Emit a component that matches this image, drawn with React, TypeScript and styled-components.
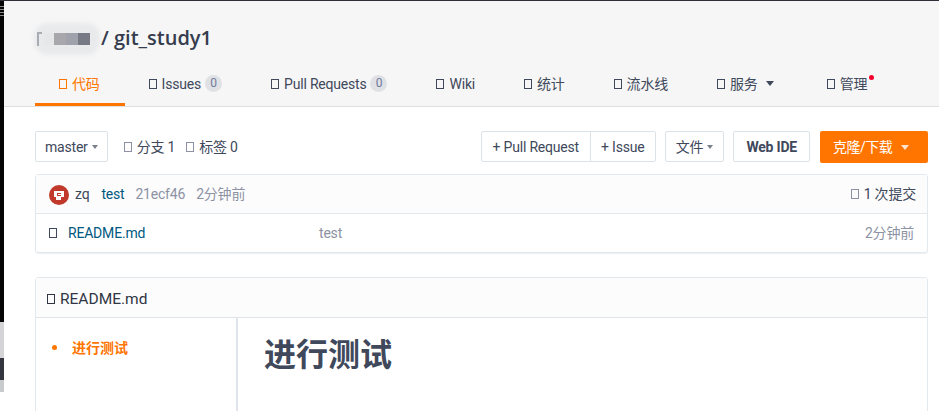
import React from "react"
import styled, { createGlobalStyle } from "styled-components"

const GlobalStyle = createGlobalStyle`
  html, body {
    margin: 0;
    padding: 0;
    background: #fff;
    overflow: hidden;
  }
  body {
    font-family: Roboto, "Noto Sans CJK SC", sans-serif;
    font-size: 14px;
    line-height: 20px;
    letter-spacing: -0.2px;
    color: #40485b;
  }
`

const tabs = [
  { label: "代码", active: true },
  { label: "Issues", count: 0 },
  { label: "Pull Requests", count: 0 },
  { label: "Wiki" },
  { label: "统计" },
  { label: "流水线" },
  { label: "服务", caret: true },
  { label: "管理", dot: true },
]

export default function App() {
  return (
    <Screen>
      <GlobalStyle />
      <SideStrip>
        <SideBlack />
        <SideShot />
      </SideStrip>
      <Page>
        <Header>
          <Title>
            <OwnerMark />
            <Blur>
              <BlurCell $shade="#e6e7e9" />
              <BlurCell $shade="#a7a7ac" />
              <BlurCell $shade="#9fa2ab" />
              <BlurCell $shade="#777a85" />
            </Blur>
            <RepoName>/ git_study1</RepoName>
          </Title>
          <Tabs>
            {tabs.map((tab) => (
              <Tab key={tab.label} $active={tab.active} $last={tab.dot}>
                <Tofu $tone={tab.active ? "#ff7500" : "#40485b"} />
                {tab.label}
                {tab.count !== undefined && <Count>{tab.count}</Count>}
                {tab.caret && <BigCaret />}
                {tab.dot && <RedDot />}
              </Tab>
            ))}
          </Tabs>
        </Header>

        <Content>
          <Toolbar>
            <Button>
              master
              <Caret />
            </Button>
            <RefInfo>
              <RefItem>
                <Tofu $tone="#8c92a4" />
                分支 1
              </RefItem>
              <RefItem>
                <Tofu $tone="#8c92a4" />
                标签 0
              </RefItem>
            </RefInfo>
            <Spacer />
            <ButtonGroup>
              <GroupButton $width={108}>+ Pull Request</GroupButton>
              <GroupButton $width={65}>+ Issue</GroupButton>
            </ButtonGroup>
            <FileButton>
              文件
              <Caret />
            </FileButton>
            <BoldButton>Web IDE</BoldButton>
            <CloneButton>
              克隆/下载
              <CloneCaret />
            </CloneButton>
          </Toolbar>

          <Card>
            <CommitRow>
              <Avatar>
                <svg width="12" height="12" viewBox="0 0 12 12">
                  <path d="M1 2h10v6H8v3H3V8H1z" fill="#fff" />
                  <path d="M4 4h4v1H5v1h3v1H4z" fill="#c0392b" />
                </svg>
              </Avatar>
              <Author>zq</Author>
              <LinkText>test</LinkText>
              <Muted>21ecf46</Muted>
              <Muted>2分钟前</Muted>
              <Spacer />
              <Tofu $tone="#8c92a4" />
              <span>1 次提交</span>
            </CommitRow>
            <FileRow>
              <FileName>
                <Tofu $tone="#40485b" />
                <LinkText>README.md</LinkText>
              </FileName>
              <Muted>test</Muted>
              <Spacer />
              <Muted>2分钟前</Muted>
            </FileRow>
          </Card>

          <ReadmeCard>
            <ReadmeHead>
              <Tofu $tone="#303643" />
              README.md
            </ReadmeHead>
            <ReadmeBody>
              <Toc>
                <TocItem>进行测试</TocItem>
              </Toc>
              <Article>
                <Heading>进行测试</Heading>
              </Article>
            </ReadmeBody>
          </ReadmeCard>
        </Content>
      </Page>
    </Screen>
  )
}

const Screen = styled.div`
  display: flex;
  width: 939px;
  height: 411px;
  overflow: hidden;
  border-top: 1px solid #2d2f3b;
  box-sizing: border-box;
`

const SideStrip = styled.div`
  display: flex;
  flex-direction: column;
  flex: 0 0 4px;
  overflow: hidden;
`

const SideBlack = styled.div`
  flex: 0 0 321px;
  background:
    repeating-linear-gradient(#8a8a8a 0 1px, #050505 1px 3px) 0 5px / 4px 10px no-repeat,
    #050505;
`

const SideShot = styled.div`
  flex: 1;
  background: linear-gradient(#d4d4d6 0 36px, #34363f 36px 58px, #c9cacc 58px 70px, #fff 70px);
`

const Page = styled.div`
  flex: 1;
  min-width: 0;
`

const Header = styled.header`
  height: 106px;
  box-sizing: border-box;
  background: #f6f6f6;
  border-bottom: 1px solid #dfdfdf;
  padding: 0 0 0 31px;
  display: flex;
  flex-direction: column;
  justify-content: flex-end;
`

const Title = styled.div`
  display: flex;
  align-items: center;
  height: 30px;
  margin-bottom: 16px;
`

const OwnerMark = styled.span`
  position: relative;
  z-index: 1;
  width: 5px;
  height: 14px;
  margin-top: 1px;
  margin-left: 2px;
  border-left: 2px solid #a9abb5;
  border-top: 2px solid #a9abb5;
  box-sizing: border-box;
`

const Blur = styled.span`
  display: grid;
  grid-template-columns: 10px 12px 12px 12px;
  height: 12px;
  margin: 1px 0 0 2px;
  box-shadow: 0 0 4px 10px #e9eaec;
  background: #e9eaec;
  border-radius: 5px;
`

const BlurCell = styled.span<{ $shade: string }>`
  background: ${(p) => p.$shade};
`

const RepoName = styled.span`
  font-family: "Open Sans", sans-serif;
  font-size: 20px;
  font-weight: 600;
  letter-spacing: 0;
  color: #353c4d;
  margin-left: 11px;
`

const Tabs = styled.nav`
  display: flex;
  height: 37px;
`

const Tab = styled.div<{ $active?: boolean; $last?: boolean }>`
  position: relative;
  display: flex;
  align-items: center;
  box-sizing: border-box;
  padding: 0 25px 5px 24px;
  margin-left: ${(p) => (p.$last ? "4px" : "0")};
  color: ${(p) => (p.$active ? "#ff7500" : "#40485b")};
  border-bottom: 3px solid ${(p) => (p.$active ? "#ff7500" : "transparent")};
`

const Tofu = styled.span<{ $tone: string }>`
  display: inline-block;
  flex: none;
  width: 8px;
  height: 10px;
  margin-right: 5px;
  border: 1px solid ${(p) => p.$tone};
  box-sizing: border-box;
`

const Count = styled.span`
  width: 17px;
  height: 17px;
  margin-left: 4px;
  border-radius: 50%;
  background: #e0e1e4;
  color: #6f7a9e;
  font-size: 12px;
  line-height: 17px;
  text-align: center;
`

const BigCaret = styled.span`
  width: 0;
  height: 0;
  margin-left: 8px;
  border-left: 4.5px solid transparent;
  border-right: 4.5px solid transparent;
  border-top: 5px solid #40485b;
`

const RedDot = styled.span`
  position: absolute;
  top: 6px;
  right: 18px;
  width: 5px;
  height: 5px;
  border-radius: 50%;
  background: #f5002d;
`

const Content = styled.main`
  padding: 24px 11px 0 31px;
`

const Toolbar = styled.div`
  display: flex;
  align-items: flex-start;
  height: 32px;
  margin-bottom: 11px;
`

const Spacer = styled.span`
  flex: 1;
`

const Button = styled.div`
  display: flex;
  align-items: center;
  height: 31px;
  padding: 0 9px;
  margin-right: 9px;
  box-sizing: border-box;
  border: 1px solid #dce3e8;
  border-radius: 2px;
  background: #fff;
  color: #40485b;
`

const FileButton = styled(Button)`
  padding: 0 10px;
`

const BoldButton = styled(Button)`
  font-weight: 700;
  padding: 0 12px;
  margin-right: 10px;
`

const Caret = styled.span`
  width: 0;
  height: 0;
  margin-left: 4px;
  border-left: 3.5px solid transparent;
  border-right: 3.5px solid transparent;
  border-top: 4px solid #7a7f8c;
`

const RefInfo = styled.div`
  display: flex;
  align-items: center;
  height: 31px;
  gap: 11px;
  margin-left: 7px;
`

const RefItem = styled.span`
  display: flex;
  align-items: center;
`

const ButtonGroup = styled.div`
  display: flex;
  height: 31px;
  margin-right: 9px;
  box-sizing: border-box;
  border: 1px solid #dce3e8;
  border-radius: 2px;
`

const GroupButton = styled.div<{ $width: number }>`
  display: flex;
  align-items: center;
  justify-content: center;
  width: ${(p) => p.$width}px;
  box-sizing: border-box;
  color: #40485b;

  & + & {
    border-left: 1px solid #dce3e8;
  }
`

const CloneButton = styled.div`
  display: flex;
  align-items: center;
  box-sizing: border-box;
  width: 108px;
  height: 32px;
  padding-left: 13px;
  border-radius: 2px;
  background: #ff7500;
  color: #fff;
  letter-spacing: -0.5px;
`

const CloneCaret = styled.span`
  width: 0;
  height: 0;
  margin-left: 9px;
  border-left: 4.5px solid transparent;
  border-right: 4.5px solid transparent;
  border-top: 5px solid #ffe3cc;
`

const Card = styled.section`
  border: 1px solid #e3e8ec;
  border-radius: 3px;
  margin-bottom: 24px;
  box-shadow: 0 1px 1px #eceff3;
`

const CommitRow = styled.div`
  display: flex;
  align-items: center;
  height: 38px;
  padding: 0 11px 0 13px;
  background: #fcfcfc;
  border-bottom: 1px solid #e3e8ec;
`

const Avatar = styled.span`
  display: flex;
  align-items: center;
  justify-content: center;
  width: 20px;
  height: 20px;
  margin: 2px 6px 0 0;
  border-radius: 50%;
  background: #c0392b;
`

const Author = styled.span`
  margin-right: 12px;
`

const LinkText = styled.span`
  color: #005980;
`

const Muted = styled.span`
  color: #8c92a4;
  margin-left: 11px;
`

const FileRow = styled.div`
  display: flex;
  align-items: center;
  height: 38px;
  padding: 0 13px 0 13px;

  ${Muted} {
    margin-left: 0;
  }
`

const FileName = styled.span`
  display: flex;
  align-items: center;
  flex: 0 0 270px;

  ${Tofu} {
    margin-right: 11px;
  }
`

const ReadmeCard = styled.section`
  border: 1px solid #e3e8ec;
  border-radius: 3px 3px 0 0;
  height: 200px;
`

const ReadmeHead = styled.div`
  display: flex;
  align-items: center;
  box-sizing: border-box;
  height: 40px;
  padding: 3px 0 0 11px;
  background: #fcfcfc;
  border-bottom: 1px solid #dfe4ea;
  font-size: 15.5px;
  letter-spacing: 0;
  color: #303643;
`

const ReadmeBody = styled.div`
  display: grid;
  grid-template-columns: 202px 1fr;
  height: 100%;
`

const Toc = styled.ul`
  margin: 0;
  padding: 22px 0 0 36px;
  border-right: 2px solid #dfe4ea;
  list-style: none;
`

const TocItem = styled.li`
  position: relative;
  font-size: 14px;
  font-weight: 700;
  line-height: 16px;
  letter-spacing: 0;
  color: #ff7500;

  &::before {
    content: "";
    position: absolute;
    left: -20px;
    top: 5px;
    width: 5px;
    height: 5px;
    border-radius: 50%;
    background: #ff7500;
  }
`

const Article = styled.article`
  padding: 16px 26px;
`

const Heading = styled.h1`
  margin: 0;
  font-size: 32px;
  line-height: 42px;
  font-weight: 700;
  letter-spacing: 0;
  color: #40485b;
`
